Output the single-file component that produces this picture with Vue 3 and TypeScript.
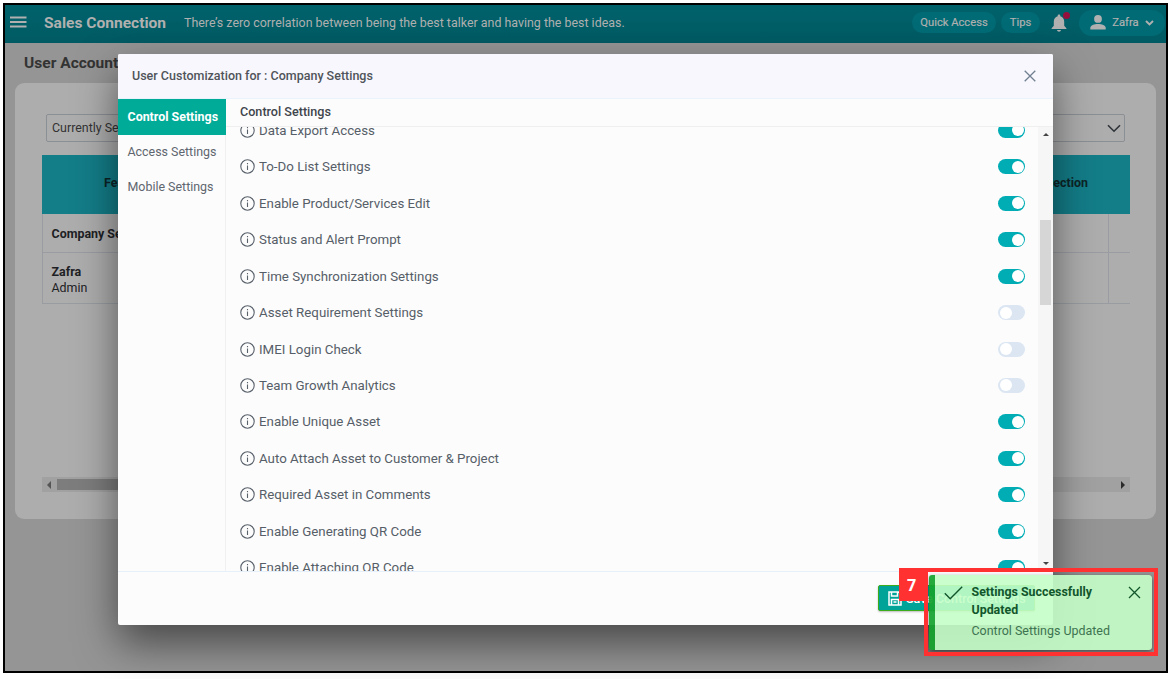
<script setup lang="ts">
interface Setting {
  label: string
  on: boolean
}

const settings: Setting[] = [
  { label: 'Data Export Access', on: true },
  { label: 'To-Do List Settings', on: true },
  { label: 'Enable Product/Services Edit', on: true },
  { label: 'Status and Alert Prompt', on: true },
  { label: 'Time Synchronization Settings', on: true },
  { label: 'Asset Requirement Settings', on: false },
  { label: 'IMEI Login Check', on: false },
  { label: 'Team Growth Analytics', on: false },
  { label: 'Enable Unique Asset', on: true },
  { label: 'Auto Attach Asset to Customer & Project', on: true },
  { label: 'Required Asset in Comments', on: true },
  { label: 'Enable Generating QR Code', on: true },
  { label: 'Enable Attaching QR Code', on: true },
]

const tabs: string[] = ['Control Settings', 'Access Settings', 'Mobile Settings']
</script>

<template>
  <div class="screen">
    <div class="frame">
      <header class="topbar">
        <svg class="burger" width="17" height="13" viewBox="0 0 17 13">
          <path d="M0 1.500h16.500M0 6h16.500M0 10.500h16.500" stroke="#b0b0b0" stroke-width="2.200" />
        </svg>
        <span class="brand">Sales Connection</span>
        <span class="quote">There’s zero correlation between being the best talker and having the best ideas.</span>
        <span class="grow"></span>
        <span class="pill quick">Quick Access</span>
        <span class="pill tips">Tips</span>
        <span class="bell">
          <svg width="16" height="18" viewBox="0 0 16 18">
            <path d="M8 0.5c-.8 0-1.3.5-1.3 1.3v.5C4.200 2.900 2.800 5 2.800 7.500v4.300L.6 14.200V15h14.800v-.8l-2.200-2.400V7.500c0-2.500-1.400-4.600-3.900-5.200v-.5C9.300 1 8.800.5 8 .5zM6 16c.2 1 1 1.700 2 1.700s1.800-.7 2-1.700z" fill="#b0b0b0" />
          </svg>
          <i class="dot"></i>
        </span>
        <span class="pill user">
          <svg width="16" height="15" viewBox="0 0 16 15">
            <circle cx="8" cy="3.900" r="3.900" fill="#b0b0b0" />
            <path d="M.3 14.500v-1.700c0-2.600 4-3.900 7.700-3.900s7.700 1.300 7.700 3.900v1.700z" fill="#b0b0b0" />
          </svg>
          <span>Zafra</span>
          <svg width="9" height="6" viewBox="0 0 9 6">
            <path d="M1 1l3.500 3.500L8 1" fill="none" stroke="#b0b0b0" stroke-width="1.900" />
          </svg>
        </span>
      </header>

      <main class="page">
        <h1>User Accounts</h1>
        <section class="card">
          <div class="select">
            <span>Currently Selected</span>
            <svg width="14" height="9" viewBox="0 0 14 9">
              <path d="M1 1.200l6 6 6-6" fill="none" stroke="#2e3338" stroke-width="1.600" />
            </svg>
          </div>
          <div class="grid">
            <div class="ghead">
              <span>Features</span>
              <span>Section</span>
            </div>
            <div class="company"><b>Company Settings</b><i></i></div>
            <div class="person"><div><b>Zafra</b><span>Admin</span></div><i></i></div>
          </div>
          <div class="hscroll">
            <i class="left"></i>
            <i class="thumb"></i>
            <i class="right"></i>
          </div>
        </section>
      </main>
    </div>

    <div class="modal">
      <div class="mhead">
        <span>User Customization for : Company Settings</span>
        <svg width="12" height="12" viewBox="0 0 12 12">
          <path d="M.7.7l10.600 10.600M11.300.7L.7 11.300" stroke="#708090" stroke-width="1.300" />
        </svg>
      </div>
      <div class="mbody">
        <nav class="tabs">
          <span v-for="(tab, i) in tabs" :key="tab" class="tab" :class="{ active: i === 0 }">{{ tab }}</span>
        </nav>
        <div class="panel">
          <div class="ptitle">Control Settings</div>
          <div class="scroll">
            <div class="list">
              <div v-for="s in settings" :key="s.label" class="row">
                <svg class="info" width="15" height="15" viewBox="0 0 15 15">
                  <circle cx="7.500" cy="7.500" r="6.700" fill="none" stroke="#59616b" stroke-width="1.100" />
                  <path d="M7.500 6.400v4.600M7.500 4v1.200" stroke="#59616b" stroke-width="1.100" />
                </svg>
                <span class="label">{{ s.label }}</span>
                <span class="switch" :class="{ on: s.on }"></span>
              </div>
            </div>
            <div class="vscroll">
              <i class="up"></i>
              <i class="vthumb"></i>
              <i class="down"></i>
            </div>
          </div>
        </div>
      </div>
      <div class="mfoot">
        <button class="save">
          <svg width="14" height="15" viewBox="0 0 14 15">
            <path d="M1 1h9.500L13 3.500V14H1zM3.500 1v4h6V1M3.500 14V8.500h7V14M5.500 11h3" fill="none" stroke="#fff" stroke-width="1.500" />
          </svg>
          <span>Save Control Settings</span>
        </button>
      </div>
    </div>

    <div class="toast">
      <svg class="check" width="19" height="14" viewBox="0 0 19 14">
        <path d="M.8 7.200l5.400 5.500L18.200.8" fill="none" stroke="#12562c" stroke-width="1.400" />
      </svg>
      <div class="msg">
        <b>Settings Successfully Updated</b>
        <span>Control Settings Updated</span>
      </div>
      <svg class="close" width="13" height="13" viewBox="0 0 13 13">
        <path d="M1 1l11 11M12 1L1 12" stroke="#12562c" stroke-width="1.300" />
      </svg>
    </div>
    <div class="outline"></div>
    <div class="step">7</div>
  </div>
</template>

<style>
html,
body {
  margin: 0;
  background: #fff;
  overflow: hidden;
}
</style>

<style scoped>
* {
  box-sizing: border-box;
}
.screen {
  position: relative;
  width: 1172px;
  height: 679px;
  padding: 3px;
  background: #fff;
  font-family: Roboto, sans-serif;
  overflow: hidden;
}
.frame {
  width: 1165px;
  height: 670px;
  border: 2px solid #000;
  background: #959595;
  display: flex;
  flex-direction: column;
  overflow: hidden;
}
.topbar {
  height: 38px;
  flex: none;
  display: flex;
  align-items: center;
  padding: 0 3px 3px 5px;
  background: linear-gradient(#00626b, #005a63);
  color: #b0b0b0;
  white-space: nowrap;
}
.burger {
  flex: none;
  margin-right: 17px;
}
.brand {
  width: 140px;
  font-size: 15.550px;
  font-weight: 700;
}
.quote {
  font-size: 12.430px;
}
.grow {
  flex: 1;
}
.pill {
  height: 21px;
  border-radius: 13px;
  background: #006b75;
  display: flex;
  align-items: center;
  justify-content: center;
  font-size: 11.200px;
  -webkit-text-stroke: 0.2px #b0b0b0;
}
.quick {
  width: 84px;
  margin-right: 5px;
}
.tips {
  width: 39px;
  margin-right: 11px;
}
.bell {
  position: relative;
  width: 16px;
  height: 18px;
  margin-right: 12px;
}
.dot {
  position: absolute;
  left: 12px;
  top: -2px;
  width: 7px;
  height: 7px;
  border-radius: 50%;
  background: #960f3c;
}
.user {
  width: 86px;
  height: 26px;
  margin-right: -2px;
  gap: 6.500px;
}
.page {
  flex: 1;
  padding: 10px 10px 0;
}
h1 {
  margin: 0 0 11px 9px;
  font-size: 15.550px;
  line-height: 20px;
  height: 19px;
  font-weight: 700;
  color: #333;
}
.card {
  width: 1141px;
  height: 436px;
  border-radius: 9px;
  background: #adadad;
  padding: 31px 26px 0 27px;
}
.select {
  width: 1079px;
  height: 28px;
  margin-left: 4px;
  border: 1px solid #8b9095;
  border-radius: 2px;
  padding: 0 3px 0 5px;
  display: flex;
  align-items: center;
  justify-content: space-between;
  font-size: 12.430px;
  color: #333;
}
.select span {
  padding-bottom: 1px;
}
.grid {
  margin-top: 13px;
  color: #1e2124;
  font-size: 12.430px;
  border-left: 1px solid #999da2;
}
.ghead {
  height: 59px;
  margin-left: -1px;
  background: #137d88;
  display: flex;
  align-items: center;
  justify-content: space-between;
  padding: 0 42px 4px 62px;
  font-weight: 700;
  color: #0c2427;
}
.company,
.person {
  display: flex;
  align-items: center;
  justify-content: space-between;
  padding-left: 8.500px;
  border-bottom: 1px solid #999da2;
}
.company {
  height: 39px;
}
.company b {
  padding-top: 1px;
}
.person {
  height: 51px;
}
.person div {
  display: flex;
  flex-direction: column;
  line-height: 15.500px;
  padding-top: 3.500px;
}
.company i,
.person i {
  width: 22px;
  align-self: stretch;
  border-left: 1px solid #999da2;
}
.hscroll {
  height: 15px;
  margin-top: 173px;
  background: #a1a1a1;
  display: flex;
  align-items: center;
  padding: 0 5px;
}
.hscroll .left,
.hscroll .right {
  border: 4px solid transparent;
}
.hscroll .left {
  border-left-width: 0;
  border-right-color: #555;
}
.hscroll .right {
  margin-left: auto;
  border-right-width: 0;
  border-left-color: #2a2a2a;
}
.hscroll .thumb {
  width: 300px;
  height: 11px;
  margin-left: 6px;
  background: #7d7d7d;
}

.modal {
  position: absolute;
  left: 118px;
  top: 54px;
  width: 935px;
  height: 571px;
  background: #fcfcfc;
  border-radius: 2px;
  box-shadow: 0 18px 42px rgba(0, 0, 0, 0.52);
  display: flex;
  flex-direction: column;
  overflow: hidden;
}
.mhead {
  height: 45px;
  flex: none;
  display: flex;
  align-items: center;
  justify-content: space-between;
  padding: 0 17px 1px 14px;
  background: #f7f7fd;
  border-bottom: 1px solid #eaf2fc;
  font-size: 12.500px;
  font-weight: 500;
  color: #50545a;
}
.mbody {
  height: 472px;
  flex: none;
  display: flex;
}
.tabs {
  width: 108px;
  flex: none;
  display: flex;
  flex-direction: column;
  border-right: 1px solid #f0f0f2;
}
.tab {
  height: 35px;
  line-height: 34px;
  padding-left: 9.500px;
  font-size: 12.430px;
  color: #5f666f;
  white-space: nowrap;
}
.tab.active {
  height: 36px;
  line-height: 35px;
  width: 108px;
  background: #00ab98;
  color: #fff;
  font-weight: 700;
}
.panel {
  flex: 1;
  display: flex;
  flex-direction: column;
}
.ptitle {
  height: 28px;
  flex: none;
  padding-left: 14px;
  line-height: 26px;
  border-bottom: 1px solid #efefef;
  font-size: 12.600px;
  font-weight: 500;
  color: #3f454c;
}
.scroll {
  height: 444px;
  display: flex;
  overflow: hidden;
}
.list {
  flex: 1;
  margin-top: -14.800px;
  padding: 0 13px 0 14px;
}
.row {
  height: 36.450px;
  display: flex;
  align-items: center;
}
.info {
  flex: none;
  margin-right: 4px;
}
.label {
  flex: 1;
  font-size: 13.300px;
  color: #565e68;
}
.switch {
  width: 27px;
  height: 15px;
  border-radius: 8px;
  background: #dbe6f2;
  padding: 1.500px;
  display: flex;
}
.switch::before {
  content: '';
  width: 12px;
  height: 12px;
  border-radius: 50%;
  background: #fff;
}
.switch.on {
  background: #00adb5;
  justify-content: flex-end;
}
.vscroll {
  width: 15px;
  background: #f6f6f6;
  display: flex;
  flex-direction: column;
  align-items: center;
}
.up,
.down {
  border: 3.500px solid transparent;
}
.up {
  margin-top: 6px;
  border-top-width: 0;
  border-bottom-color: #444;
}
.down {
  margin: auto 0 6px;
  border-bottom-width: 0;
  border-top-color: #444;
}
.vthumb {
  width: 11px;
  height: 85px;
  margin-top: 84px;
  background: #d6d6d6;
}
.mfoot {
  flex: 1;
  border-top: 1px solid #e6f0fa;
  display: flex;
  justify-content: flex-end;
  padding: 13px 18px 0 0;
}
.save {
  width: 157px;
  height: 26px;
  padding: 0 0 0 9px;
  border: 1px solid #3cab1c;
  border-radius: 2px;
  background: #00a398;
  box-shadow: 0 1px 2px rgba(0, 0, 0, 0.25);
  display: flex;
  align-items: center;
  gap: 4px;
  font: 500 12.430px Roboto, sans-serif;
  color: #fff;
  white-space: nowrap;
}

.toast {
  position: absolute;
  left: 929px;
  top: 575px;
  width: 223px;
  height: 75px;
  border-radius: 3px;
  border-left: 6px solid rgba(22, 163, 46, 0.93);
  background: rgba(196, 254, 199, 0.9);
  background-clip: padding-box;
  box-shadow: 0 2px 5px rgba(0, 0, 0, 0.5);
  display: flex;
  padding: 8px 11px 0 8.500px;
  color: #12562c;
}
.check {
  flex: none;
  margin-top: 3px;
}
.msg {
  flex: 1;
  padding-left: 9px;
  display: flex;
  flex-direction: column;
  line-height: 18px;
}
.msg b {
  width: 140px;
  font-size: 12.400px;
}
.msg span {
  margin-top: 3px;
  font-size: 12.450px;
  color: #3d7350;
  white-space: nowrap;
}
.close {
  flex: none;
  margin-top: 3px;
}
.outline {
  position: absolute;
  left: 924px;
  top: 568px;
  width: 234px;
  height: 88px;
  border: 4px solid #ff3131;
}
.step {
  position: absolute;
  left: 899px;
  top: 568px;
  width: 25px;
  height: 33px;
  background: #ff3131;
  color: #fff;
  font: 700 16px/34px 'Open Sans', sans-serif;
  text-align: center;
}
</style>
